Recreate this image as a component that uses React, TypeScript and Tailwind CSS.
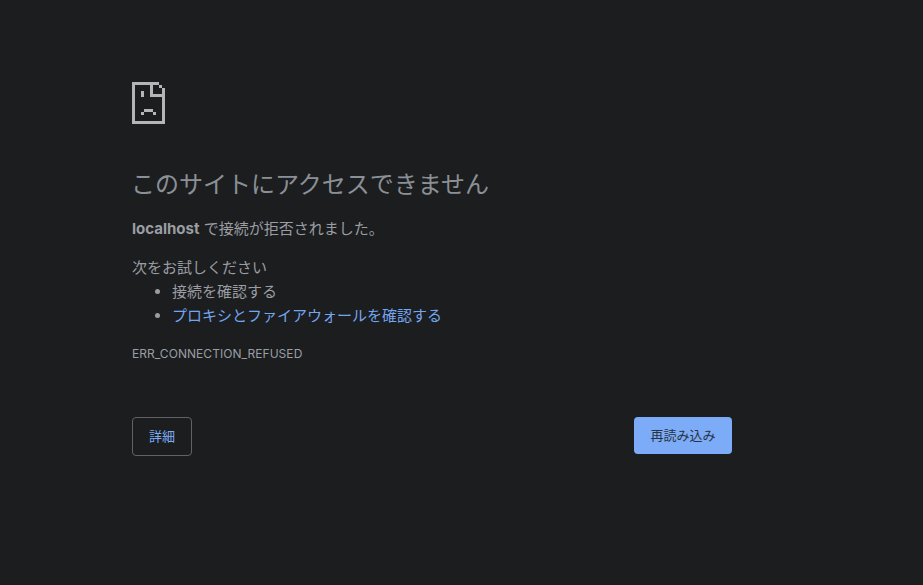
const jp = "font-['Inter','Noto_Sans_CJK_JP',sans-serif]";

function SadTab() {
  return (
    <svg width="33" height="42" viewBox="0 0 33 42" shapeRendering="crispEdges" className="block" fill="#b5b5b5">
      <path d="M0 0H27V3H3V39H30V9H33V42H0Z" />
      <path d="M18 3H21V12H30V15H18Z" />
      <path d="M27 3H30V6H27Z" />
      <path d="M30 6H33V9H30Z" />
      <path d="M9 9H12V15H9Z" />
      <path d="M12 27H21V30H12Z" />
      <path d="M9 30H12V33H9Z" />
      <path d="M21 30H24V33H21Z" />
    </svg>
  );
}

export default function App() {
  return (
    <div className={`${jp} w-[923px] h-[585px] overflow-hidden bg-[#1c1d1f] text-[15px] text-[#9a9ea3]`}>
      <div className="w-[600px] ml-[132px] pt-[82px]">
        <SadTab />
        <h1 className="mt-[45px] text-[24px] leading-[32px] font-normal text-[#8a9096] ml-[-1px]">
          このサイトにアクセスできません
        </h1>
        <p className="mt-[16px] leading-[24px]">
          <b className="font-bold">localhost</b> で接続が拒否されました。
        </p>
        <p className="mt-[15px] leading-[24px]">次をお試しください</p>
        <ul className="list-disc pl-[40px] leading-[24px]">
          <li>接続を確認する</li>
          <li>
            <a className="text-[#74a6f0]">プロキシとファイアウォールを確認する</a>
          </li>
        </ul>
        <div className="mt-[17px] text-[12px] leading-[18px] tracking-[0.05px]">ERR_CONNECTION_REFUSED</div>
        <div className="mt-[54px] flex items-start justify-between">
          <button className="w-[60px] h-[39px] rounded-[4px] border border-[#5f6368] text-[13px] text-[#7cacf8]">
            詳細
          </button>
          <button className="w-[98px] h-[37px] rounded-[4px] bg-[#7cacf8] text-[13px] text-[#2a3341]">
            再読み込み
          </button>
        </div>
      </div>
    </div>
  );
}
